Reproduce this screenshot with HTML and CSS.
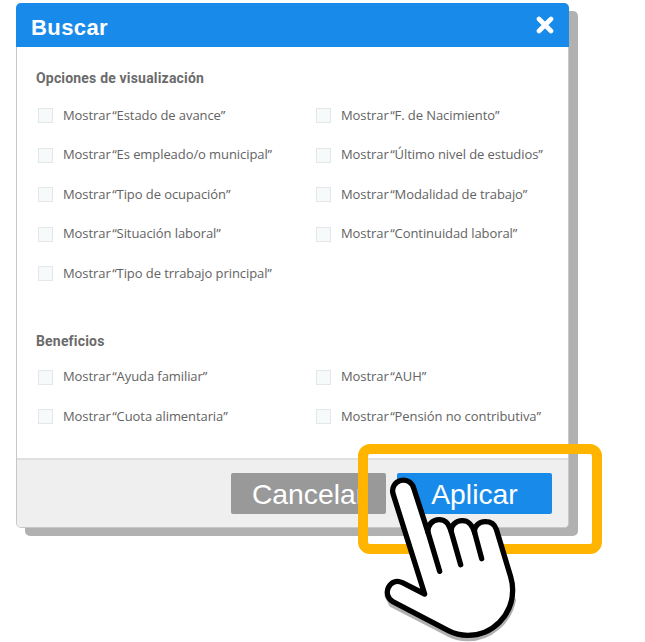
FILE: index.html
```
<!DOCTYPE html>
<html lang="es">
<head>
  <meta charset="UTF-8">
  <meta name="viewport" content="width=device-width, initial-scale=1.0">
  <title>Buscar</title>
  <link rel="stylesheet" href="styles.css">
</head>
<body>
  <div class="modal">
    <div class="modal-header">
      <h1>Buscar</h1>
      <svg class="close" viewBox="0 0 18 18"><path d="M3 3L15 15M15 3L3 15"/></svg>
    </div>

    <div class="modal-body">
      <!-- Display options -->
      <h2>Opciones de visualización</h2>
      <div class="options">
        <div class="option"><span class="box"></span><span class="label"><span class="verb">Mostrar</span>“Estado de avance”</span></div>
        <div class="option"><span class="box"></span><span class="label"><span class="verb">Mostrar</span>“F. de Nacimiento”</span></div>
        <div class="option"><span class="box"></span><span class="label"><span class="verb">Mostrar</span>“Es empleado/o municipal”</span></div>
        <div class="option"><span class="box"></span><span class="label"><span class="verb">Mostrar</span>“Último nivel de estudios”</span></div>
        <div class="option"><span class="box"></span><span class="label"><span class="verb">Mostrar</span>“Tipo de ocupación”</span></div>
        <div class="option"><span class="box"></span><span class="label"><span class="verb">Mostrar</span>“Modalidad de trabajo”</span></div>
        <div class="option"><span class="box"></span><span class="label"><span class="verb">Mostrar</span>“Situación laboral”</span></div>
        <div class="option"><span class="box"></span><span class="label"><span class="verb">Mostrar</span>“Continuidad laboral”</span></div>
        <div class="option"><span class="box"></span><span class="label"><span class="verb">Mostrar</span>“Tipo de trrabajo principal”</span></div>
      </div>

      <!-- Benefits -->
      <h2 class="benefits">Beneficios</h2>
      <div class="options">
        <div class="option"><span class="box"></span><span class="label"><span class="verb">Mostrar</span>“Ayuda familiar”</span></div>
        <div class="option"><span class="box"></span><span class="label"><span class="verb">Mostrar</span>“AUH”</span></div>
        <div class="option"><span class="box"></span><span class="label"><span class="verb">Mostrar</span>“Cuota alimentaria”</span></div>
        <div class="option"><span class="box"></span><span class="label"><span class="verb">Mostrar</span>“Pensión no contributiva”</span></div>
      </div>
    </div>

    <div class="modal-footer">
      <button class="cancel">Cancelar</button>
      <button class="apply">Aplicar</button>
    </div>
  </div>

  <!-- Highlight and pointer over the apply button -->
  <div class="highlight"></div>
  <svg class="hand" viewBox="0 0 510 546">
    <path class="hand-shadow" d="M52 408L65 434L235 522Q265 536 293 536C360 536 418 485 430 420"/>
    <path class="hand-shape" d="M164 402L69 101A31 31 0 0 1 131 84L174 217C172 196 187 179 207 179C228 179 236 191 244 216C241 196 258 182 277 182C298 182 307 196 314 218C311 200 326 185 346 185C363 185 374 193 379 208L422 350Q428 370 428 390C428 465 368 526 293 526Q262 526 235 512L67 424C53 415 48 398 55 383C63 365 80 360 97 368Z"/>
    <path class="hand-lines" d="M174 217L209 334M244 216L272 314M314 218L335 296"/>
  </svg>
</body>
</html>
```

FILE: styles.css
```
body {
  margin: 0;
  padding: 3px 0 0 16px;
  background: #fff;
  font-family: "Open Sans", sans-serif;
  color: #636363;
  height: 639px;
  box-sizing: border-box;
  overflow: hidden;
}
.modal {
  width: 553px;
  height: 525px;
  box-sizing: border-box;
  display: flex;
  flex-direction: column;
  border: 1px solid #c8c8c8;
  border-top: 0;
  border-radius: 5px;
  background: #fff;
  box-shadow: 9px 8px 0 #b1b1b1;
}
.modal-header {
  height: 44px;
  margin: 0 -1px;
  padding: 0 15px;
  display: flex;
  align-items: center;
  justify-content: space-between;
  background: #188bea;
  border-radius: 5px 5px 0 0;
}
h1 {
  margin: 5px 0 0;
  font: bold 22px/26px "Liberation Sans", Arial, sans-serif;
  letter-spacing: 0.4px;
  color: #fff;
}
.close {
  width: 18px;
  height: 18px;
  stroke: #fff;
  stroke-width: 4.6;
  stroke-linecap: round;
}
.modal-body {
  flex: 1;
  padding: 21px 0 0 19px;
}
h2 {
  margin: 0 0 10px;
  font: bold 14px/20px Roboto, sans-serif;
  letter-spacing: 0.18px;
  color: #6b6b6b;
}
h2.benefits {
  margin: 35px 0 9px;
}
.options {
  display: grid;
  grid-template-columns: 278px 250px;
  grid-auto-rows: 39.5px;
}
.option {
  display: flex;
  align-items: flex-start;
  padding: 10px 0 0 2px;
}
.box {
  width: 15px;
  height: 15px;
  box-sizing: border-box;
  border: 1px solid #e3e7e7;
  background: #f6fafb;
}
.label {
  margin: -2.3px 0 0 10px;
  font-size: 13px;
  line-height: 18px;
  letter-spacing: -0.08px;
  white-space: nowrap;
}
.verb {
  margin-right: 1.5px;
}
.modal-footer {
  height: 69px;
  box-sizing: border-box;
  display: flex;
  justify-content: flex-end;
  gap: 11px;
  padding: 13px 16px 0 0;
  border-top: 2px solid #dfdfdf;
  background: #efefef;
  border-radius: 0 0 4px 4px;
}
button {
  width: 155px;
  height: 41px;
  padding: 2px 0 0;
  border: 0;
  border-radius: 2px;
  font: 28.3px "Liberation Sans", Arial, sans-serif;
  color: #fff;
}
.cancel {
  background: #999;
}
.apply {
  background: #188bea;
}
.highlight {
  position: absolute;
  left: 358px;
  top: 444px;
  width: 244px;
  height: 110px;
  box-sizing: border-box;
  border: 10px solid #ffb400;
  border-radius: 12px;
}
.hand {
  position: absolute;
  left: 370px;
  top: 460px;
  width: 170px;
  height: 182px;
  fill: none;
  stroke: #000;
  stroke-width: 16;
  stroke-linecap: round;
  stroke-linejoin: round;
}
.hand-shape {
  fill: #fff;
}
.hand-shadow {
  stroke: #b1b1b1;
}
```
